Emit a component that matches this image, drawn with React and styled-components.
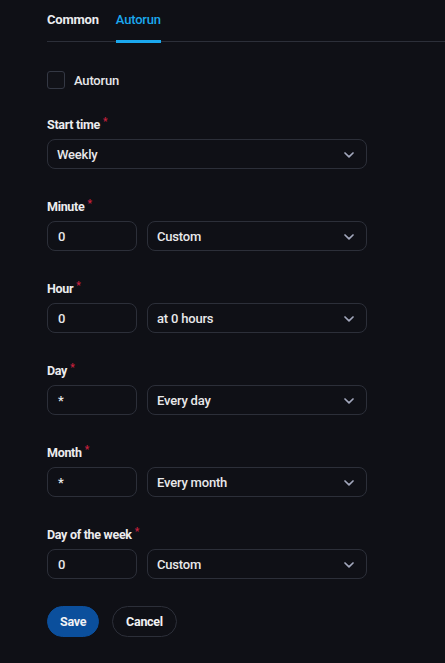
import React, { useState } from "react";
import styled, { createGlobalStyle } from "styled-components";

const GlobalStyle = createGlobalStyle`
  html, body {
    margin: 0;
    padding: 0;
    background: #0f1016;
  }
  body {
    font-family: Roboto, "Liberation Sans", sans-serif;
    color: #e8e8ea;
  }
`;

const Page = styled.div`
  min-height: 663px;
  padding-left: 47px;
  background: #0f1016;
`;

const TabBar = styled.div`
  display: flex;
  gap: 17px;
  height: 41px;
  border-bottom: 1px solid #2c2f39;
`;

const Tab = styled.div`
  position: relative;
  display: flex;
  align-items: center;
  height: 39px;
  font-size: 13px;
  font-weight: ${(p) => (p.$active ? 500 : 700)};
  color: ${(p) => (p.$active ? "#1ba8ee" : "#ececee")};
  letter-spacing: -0.2px;

  &::after {
    content: "";
    display: ${(p) => (p.$active ? "block" : "none")};
    position: absolute;
    left: 0;
    right: 0;
    bottom: -4px;
    height: 3px;
    background: #1ba8ee;
  }
`;

const Form = styled.div`
  width: 320px;
  display: flex;
  flex-direction: column;
  padding-top: 29px;
`;

const CheckRow = styled.label`
  display: flex;
  align-items: center;
  gap: 9px;
  font-size: 13px;
  font-weight: 500;
  color: #e6e6e8;
  margin-bottom: 28px;
  letter-spacing: -0.2px;
`;

const Box = styled.span`
  width: 16px;
  height: 16px;
  border: 1px solid #343844;
  border-radius: 3px;
  background: #111218;
`;

const Field = styled.div`
  display: flex;
  flex-direction: column;
  gap: 6px;
  margin-bottom: 30px;
`;

const Label = styled.div`
  font-size: 12.5px;
  font-weight: 700;
  line-height: 16px;
  color: #ececee;
  letter-spacing: -0.3px;
`;

const Star = styled.sup`
  color: #c8203e;
  font-size: 10px;
  margin-left: 3px;
  vertical-align: 4px;
  line-height: 0;
`;

const Row = styled.div`
  display: flex;
  gap: 10px;
`;

const Input = styled.div`
  box-sizing: border-box;
  flex: 0 0 90px;
  height: 30px;
  border: 1px solid #2c2f39;
  border-radius: 8px;
  padding: 0 10px;
  display: flex;
  align-items: center;
  font-size: 13px;
  font-weight: 500;
  color: #e8e8ea;
`;

const Select = styled.div`
  box-sizing: border-box;
  flex: 1 0 auto;
  height: 30px;
  border: 1px solid #2c2f39;
  border-radius: 8px;
  padding: 0 11px 0 9px;
  display: flex;
  align-items: center;
  justify-content: space-between;
  font-size: 13px;
  font-weight: 500;
  color: #e8e8ea;
  letter-spacing: -0.2px;
`;

const Chevron = styled.svg`
  width: 12px;
  height: 8px;
  color: #a3a8bd;
  margin-top: 1px;
`;

const Buttons = styled.div`
  display: flex;
  gap: 13px;
  margin-top: -3px;
`;

const Button = styled.button`
  box-sizing: border-box;
  height: 31px;
  padding: 0 ${(p) => (p.$primary ? "12px" : "13px")};
  border-radius: 16px;
  border: 1px solid ${(p) => (p.$primary ? "#0b4f9c" : "#2c2f39")};
  background: ${(p) => (p.$primary ? "#0b4f9c" : "transparent")};
  color: #f2f2f4;
  font-family: Roboto, "Liberation Sans", sans-serif;
  font-size: 12.5px;
  font-weight: 700;
  letter-spacing: -0.3px;
  cursor: pointer;
`;

const SelectBox = ({ value }) => (
  <Select>
    <span>{value}</span>
    <Chevron viewBox="0 0 12 8" fill="none">
      <polyline
        points="2,2 6,5.8 10,2"
        stroke="currentColor"
        strokeWidth="1.7"
        strokeLinecap="round"
        strokeLinejoin="round"
      />
    </Chevron>
  </Select>
);

const rows = [
  { label: "Minute", input: "0", select: "Custom" },
  { label: "Hour", input: "0", select: "at 0 hours" },
  { label: "Day", input: "*", select: "Every day" },
  { label: "Month", input: "*", select: "Every month" },
  { label: "Day of the week", input: "0", select: "Custom" },
];

export default function App() {
  const [tab] = useState("autorun");

  return (
    <Page>
      <GlobalStyle />
      <TabBar>
        <Tab $active={tab === "common"}>Common</Tab>
        <Tab $active={tab === "autorun"}>Autorun</Tab>
      </TabBar>
      <Form>
        <CheckRow>
          <Box />
          Autorun
        </CheckRow>
        <Field>
          <Label>
            Start time<Star>*</Star>
          </Label>
          <SelectBox value="Weekly" />
        </Field>
        {rows.map((r) => (
          <Field key={r.label}>
            <Label>
              {r.label}
              <Star>*</Star>
            </Label>
            <Row>
              <Input>{r.input}</Input>
              <SelectBox value={r.select} />
            </Row>
          </Field>
        ))}
        <Buttons>
          <Button $primary>Save</Button>
          <Button>Cancel</Button>
        </Buttons>
      </Form>
    </Page>
  );
}
